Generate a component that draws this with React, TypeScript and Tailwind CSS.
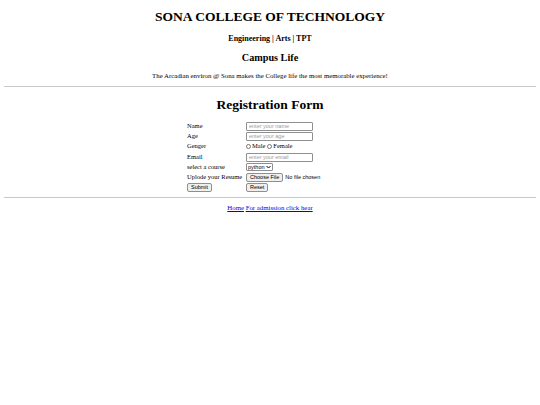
import React from "react";

const serif = { fontFamily: '"Liberation Serif", "Times New Roman", serif' };
const sans = { fontFamily: '"Liberation Sans", Arial, sans-serif' };

function TextInput({ placeholder }: { placeholder: string }) {
  return (
    <input
      type="text"
      placeholder={placeholder}
      className="box-border h-[9px] w-[67px] rounded-[1px] border border-[#8f8f8f] bg-white px-[2px] text-[5.5px] leading-none outline-none placeholder:text-[#9a9a9a]"
      style={sans}
    />
  );
}

function Btn({ children }: { children: React.ReactNode }) {
  return (
    <button
      className="box-border flex h-[9px] items-center rounded-[2px] border border-[#8f8f8f] bg-[#efefef] px-[3px] text-[5.5px] leading-none text-black"
      style={sans}
    >
      {children}
    </button>
  );
}

function Radio({ label }: { label: string }) {
  return (
    <span className="flex items-center gap-[1px]">
      <span className="box-border inline-block h-[5px] w-[5px] rounded-full border border-[#767676] bg-white" />
      <span>{label}</span>
    </span>
  );
}

export default function App() {
  const label = "flex h-[10.3px] items-center whitespace-nowrap";
  const field = "flex h-[10.3px] items-center whitespace-nowrap";
  return (
    <div className="min-h-[405px] w-[540px] bg-white px-1 text-black" style={serif}>
      <h1 className="pt-[8px] text-center text-[13.5px] font-bold leading-[17px]">SONA COLLEGE OF TECHNOLOGY</h1>
      <h4 className="mt-[9px] text-center text-[8px] font-bold leading-[10px]">Engineering | Arts | TPT</h4>
      <h3 className="mt-[8px] text-center text-[10.2px] font-bold leading-[12px]">Campus Life</h3>
      <p className="mt-[7px] text-center text-[6.8px] leading-[9px]">
        The Arcadian environ @ Sona makes the College life the most memorable experience!
      </p>
      <hr className="mt-[6px] border-t border-[#c8c8c8]" />
      <h2 className="mt-[10px] text-center text-[13.5px] font-bold leading-[15px]">Registration Form</h2>

      <div className="mx-auto mt-[9px] grid w-[166px] grid-cols-[59px_auto] text-[6.5px] leading-none">
        <div className={label}>Name</div>
        <div className={field}><TextInput placeholder="enter your name" /></div>
        <div className={label}>Age</div>
        <div className={field}><TextInput placeholder="enter your age" /></div>
        <div className={label}>Genger</div>
        <div className={`${field} gap-[2px]`}>
          <Radio label="Male" />
          <Radio label="Female" />
        </div>
        <div className={label}>Email</div>
        <div className={field}><TextInput placeholder="enter your email" /></div>
        <div className={label}>select a course</div>
        <div className={field}>
          <span
            className="box-border flex h-[8px] items-center gap-[1px] rounded-[1px] border border-[#8f8f8f] bg-white px-[1px] text-[5.5px] leading-none"
            style={sans}
          >
            python
            <svg width="5" height="4" viewBox="0 0 10 8"><path d="M1 2l4 4 4-4" fill="none" stroke="#000" strokeWidth="2" /></svg>
          </span>
        </div>
        <div className={label}>Uplode your Resume</div>
        <div className={`${field} gap-[2px]`} style={sans}>
          <Btn>Choose File</Btn>
          <span className="text-[5.5px]">No file chosen</span>
        </div>
        <div className={label}><Btn>Submit</Btn></div>
        <div className={field}><Btn>Reset</Btn></div>
      </div>

      <hr className="mt-[4px] border-t border-[#c8c8c8]" />
      <div className="mt-[5px] text-center text-[6.8px] leading-[9px]">
        <a href="#" className="text-[#0000ee] underline">Home</a>{" "}
        <a href="#" className="text-[#0000ee] underline">For admission click hear</a>
      </div>
    </div>
  );
}
